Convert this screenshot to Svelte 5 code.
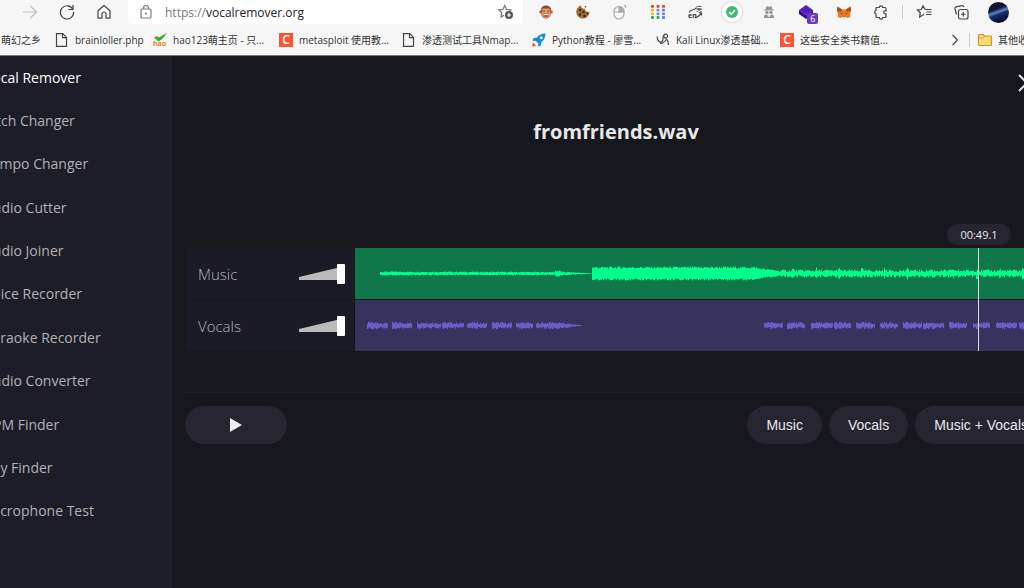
<script lang="ts">
  type Segment = { from: number; to: number; start: number; end: number };

  const tools = [
    'Vocal Remover',
    'Pitch Changer',
    'Tempo Changer',
    'Audio Cutter',
    'Audio Joiner',
    'Voice Recorder',
    'Karaoke Recorder',
    'Audio Converter',
    'BPM Finder',
    'Key Finder',
    'Microphone Test'
  ];

  const bookmarks = [
    { icon: '', title: '萌幻之乡' },
    { icon: 'file', title: 'brainloller.php' },
    { icon: 'hao', title: 'hao123萌主页 - 只...' },
    { icon: 'csdn', title: 'metasploit 使用教...' },
    { icon: 'file', title: '渗透测试工具Nmap...' },
    { icon: 'rocket', title: 'Python教程 - 廖雪...' },
    { icon: 'kali', title: 'Kali Linux渗透基础...' },
    { icon: 'csdn', title: '这些安全类书籍值...' }
  ];

  const extensions = ['monkey', 'cookie', 'mouse', 'grid', 'translate', 'check', 'spy', 'gem', 'fox', 'puzzle'];

  const WIDTH = 693;
  const MID = 25;

  // amplitude runs from start to end over each stretch of the track
  const intro: Segment[] = [
    { from: 25, to: 200, start: 2.2, end: 1.8 },
    { from: 200, to: 206, start: 3.5, end: 3 },
    { from: 206, to: 236, start: 2, end: 0.4 }
  ];
  const chorus: Segment[] = [
    { from: 237, to: 402, start: 7, end: 7 },
    { from: 402, to: 424, start: 6, end: 3 }
  ];
  const verse: Segment[] = [{ from: 424, to: 693, start: 4, end: 4 }];

  const vocals: Segment[] = [
    [12, 33], [37, 57], [62, 86], [87, 109], [112, 132], [137, 157], [161, 178],
    [409, 428], [432, 450], [456, 478], [479, 496], [501, 520], [525, 543],
    [548, 567], [568, 589], [594, 612], [618, 635], [641, 662], [664, 693]
  ].map(([from, to]) => ({ from, to, start: 4, end: 3 }));
  vocals.push({ from: 181, to: 198, start: 3, end: 4 }, { from: 198, to: 227, start: 4, end: 0.5 });

  function noise(n: number) {
    const v = Math.sin(n * 12.9898) * 43758.5453;
    return v - Math.floor(v);
  }

  function wave(segments: Segment[], floor: number, beat = 0) {
    let d = '';
    for (const s of segments) {
      for (let x = s.from; x < s.to; x++) {
        let amp = s.start + ((s.end - s.start) * (x - s.from)) / (s.to - s.from);
        if (beat && x % beat < 2) amp *= 1.5;
        const up = amp * (floor + (1 - floor) * noise(x));
        const down = amp * (floor + (1 - floor) * noise(x + 900));
        d += `M${x + 0.5} ${(MID + 0.5 - up).toFixed(1)}V${(MID + 0.5 + down).toFixed(1)}`;
      }
    }
    return d;
  }

  const tracks = [
    { name: 'Music', path: wave(intro, 0.5) + wave(chorus, 0.7) + wave(verse, 0.35, 23) },
    { name: 'Vocals', path: wave(vocals, 0.4) }
  ];
</script>

<div class="page">
  <header class="browser">
    <div class="toolbar">
      <button class="tool faded" aria-label="Forward">
        <svg width="16" height="16" viewBox="0 0 16 16"><path d="M1 8h13M8.500 2l6 6-6 6" /></svg>
      </button>
      <button class="tool" aria-label="Refresh">
        <svg width="16" height="16" viewBox="0 0 16 16"><path d="M13.800 5.200A6.600 6.600 0 1 0 14.600 8M14 1v4.500H9.500" /></svg>
      </button>
      <button class="tool" aria-label="Home">
        <svg width="14" height="16" viewBox="0 0 14 16"><path d="M1 6.800 7 1.500l6 5.300v7.400H9V10a2 2 0 0 0-4 0v4.200H1z" /></svg>
      </button>
      <div class="address">
        <svg class="lock" width="12" height="16" viewBox="0 0 12 16">
          <rect x="1" y="5" width="10" height="9" rx="1" /><path d="M3.500 5V4a2.500 2.500 0 0 1 5 0v1" /><circle cx="6" cy="9.500" r=".5" />
        </svg>
        <a href="https://vocalremover.org"><span>https://</span>vocalremover.org</a>
        <button class="star" aria-label="Add to favorites">
          <svg width="16" height="16" viewBox="0 0 16 16" stroke="#777">
            <path d="M6 11.300 3 13l.7-4.300L.8 6l4.100-.6L6.700 1.500l1.800 3.900 4.300.6-1 1" />
            <g stroke="none"><circle cx="11" cy="11" r="4" class="badge" /></g><path d="M9 11h4M11 9v4" stroke="#fff" />
          </svg>
        </button>
      </div>
      <div class="extensions">
        {#each extensions as name}
          <button class="tool" aria-label={name}>
            {#if name === 'monkey'}
              <svg width="14" height="14" viewBox="0 0 14 14" stroke="none">
                <circle cx="1.800" cy="7" r="1.700" fill="#bd7048" /><circle cx="12.200" cy="7" r="1.700" fill="#bd7048" />
                <path fill="#8d4932" d="M2 5C2 2 4 .5 7 .5S12 2 12 5l-.5 5c-.6 2.500-2.500 3.500-4.500 3.500S3 12.500 2.500 10z" />
                <path fill="#eb9a6a" d="M3 6c0-3 2.500-3.500 4-2 1.500-1.500 4-1 4 2l.5 3.500c-.5 2.500-2.500 3.500-4.500 3.500s-4-1-4.500-3.500z" />
                <path fill="#a8452f" d="M3.800 5.500h2.200v1.200H3.800zM8 5.500h2.200v1.200H8z" /><path fill="#c43a28" d="M3.800 8.500h6.400c-.2 2.500-1.500 3.500-3.200 3.500S4 11 3.800 8.500z" /><path fill="#fff" d="M4.500 9h5v1.200h-5z" />
              </svg>
            {:else if name === 'cookie'}
              <svg width="14" height="14" viewBox="0 0 14 14" stroke="none">
                <path fill="#a66c31" d="M5 .6a3 3 0 0 0 3.800 3 3 3 0 0 0 4.600 2.800A6.600 6.600 0 1 1 5 .6z" />
                <g fill="#40291b"><circle cx="4" cy="5" r="1.300" /><circle cx="7.500" cy="7" r="1.300" /><circle cx="4" cy="9.500" r="1.200" /><circle cx="8.500" cy="11" r="1.300" /><circle cx="11.200" cy="8.500" r="1" /><circle cx="9.500" cy="1.800" r=".8" /></g>
              </svg>
            {:else if name === 'mouse'}
              <svg width="14" height="15" viewBox="0 0 14 15" stroke="#aaa">
                <path d="M1 6.500a5 5 0 0 1 10 0V9a5 5 0 0 1-10 0z" /><path fill="#aaa" d="M6 1.500v5.500h5c0-3-1.500-5-5-5.500z" /><path d="M1 7h10M11 .5h1.500V3" />
              </svg>
            {:else if name === 'grid'}
              <svg width="14" height="14" viewBox="0 0 14 14" stroke="none">
                {#each ['#e53b32', '#e53b32', '#e53b32', '#f2bd17', '#5b8fee', '#4f86e8', '#f2bd17', '#5b8fee', '#5b8fee', '#37a852', '#37a852', '#4f86e8'] as fill, i}
                  <rect x={(i % 3) * 5.5} y={Math.floor(i / 3) * 3.7} width="3" height="2.800" rx="1" {fill} />
                {/each}
              </svg>
            {:else if name === 'translate'}
              <svg width="14" height="14" viewBox="0 0 14 14">
                <path d="M1 7.500c2-4 5-1 7.500-5M7 12.500c3.500.5 4.500-3 6.500-4.500M11 7.500l2.500.5v2.500" /><text x="0" y="13" font-size="7" font-weight="bold">en</text><text x="8" y="6" font-size="6">英</text>
              </svg>
            {:else if name === 'check'}
              <span class="check-bg">
                <svg width="12" height="12" viewBox="0 0 12 12" stroke="none"><circle cx="6" cy="6" r="6" fill="#3dbb70" /><path d="m3 6 2.200 2.200L9 4" stroke="#fff" stroke-width="1.700" /></svg>
              </span>
            {:else if name === 'spy'}
              <svg width="12" height="14" viewBox="0 0 12 14" stroke="none">
                <g fill="#999"><path d="m3.500 1 2.500.7L8.500 1l1 3.500H11v1H1v-1h1.500z" /><circle cx="4" cy="7.500" r="1.700" /><circle cx="8" cy="7.500" r="1.700" /><path d="M1 10.500 3 9.500l3 1.500 3-1.500 2 1V13H1z" /></g><path fill="#f6f6f6" d="m5.200 11.300.8-.5.800.5L6 13z" />
              </svg>
            {:else if name === 'gem'}
              <span class="gem">
                <svg width="15" height="15" viewBox="0 0 15 15" stroke="none"><path fill="#5420ba" d="M7 0 14 5 7 10 0 5z" /><path fill="#35108e" d="m0 5 7 5v4L0 9zM14 5 7 10v4l7-5z" /></svg>
                <b>6</b>
              </span>
            {:else if name === 'fox'}
              <svg width="14" height="13" viewBox="0 0 14 13" stroke="none">
                <path fill="#ed7b21" d="m.5.5 4.500 3h4l4.500-3L14 5l-1 3 .5 2.500L11 12l-2-.5H5L3 12 .5 10.500 1 8 0 5z" />
                <path fill="#b44a16" d="m.5.5 4.500 3L4 6 0 5zM13.500.5 9 3.500 10 6l4-1z" /><path fill="#333" d="m3.500 7 2 .5-.5 1zM10.500 7l-2 .5.500 1zM6 10.500h2v1.500H6z" /><path fill="#e7d9cc" d="m5 11.500 1-1 1 .5 1-.5 1 1-1 1H6z" />
              </svg>
            {:else}
              <svg width="14" height="14" viewBox="0 0 14 14"><path d="M3 2.500h2.300a1.700 1.700 0 0 1 3.400 0H11a1 1 0 0 1 1 1v2.300h-.8a1.500 1.500 0 0 0 0 3h.8v2.700a1 1 0 0 1-1 1H8.700a1.700 1.700 0 0 1-3.400 0H3a1 1 0 0 1-1-1V9a1.800 1.800 0 0 1 0-3.500v-2a1 1 0 0 1 1-1z" /></svg>
            {/if}
          </button>
        {/each}
      </div>
      <span class="rule"></span>
      <button class="tool" aria-label="Favorites">
        <svg width="15" height="14" viewBox="0 0 15 14"><path d="M9 4.500 7.700 4 6 .8 4.300 4.500.5 5l2.800 2.700-.7 4.300L6 10l1-.7M9 4.500h5.500M9.500 7h5M9 9.500h5.500" /></svg>
      </button>
      <button class="tool" aria-label="Collections">
        <svg width="15" height="15" viewBox="0 0 15 15"><rect x="4.500" y="4.500" width="9.500" height="9.500" rx="2" /><path d="M9.250 7v4.500M7 9.250h4.500M2.500 9.500 1 4a2 2 0 0 1 1-2.200L8 .7a2 2 0 0 1 2 1.300" /></svg>
      </button>
      <button class="tool" aria-label="Profile"><span class="avatar"></span></button>
    </div>

    <nav class="bookmarks">
      {#each bookmarks as b}
        <a href="#bookmark">
          {#if b.icon === 'file'}
            <svg class="icon" viewBox="0 0 14 14"><path d="M1.500.7h6.300l3.700 3.700v9h-10zM7.500 1v3.700h3.700" /></svg>
          {:else if b.icon === 'hao'}
            <svg class="icon" viewBox="0 0 14 14" stroke="none"><path fill="#39aa35" d="M1 4.500 4 3l2 1.500L13.500 0C11 5 8 7 5.500 8.500z" /><text class="hao" x="0" y="13" font-size="7" font-weight="bold">hao</text></svg>
          {:else if b.icon === 'csdn'}
            <span class="icon csdn">C</span>
          {:else if b.icon === 'rocket'}
            <svg class="icon" viewBox="0 0 14 14" stroke="none"><path fill="#168ed1" d="M13.500.5C9 .5 6.500 2.500 5 4.500L1.500 5 .5 8l3-.3 2.800 2.800-.3 3 3-1 .5-3.500c2-1.500 4-4 4-8.500z" /><circle cx="9.300" cy="4.700" r="1.500" fill="#e8f5ff" /><path fill="#e75d43" d="M1 9.500 4.500 13 0 13.500z" /></svg>
          {:else if b.icon === 'kali'}
            <svg class="icon" viewBox="0 0 14 14"><path d="M1 3.500C1.500 8 4 10 6 8.500S6 4 8 2s4-.5 3.500 1.500S8 6 8.500 3.500M4 9.500c1 2 4 0 6-2.500 1-1 2 0 2.500 5" /></svg>
          {/if}
          <span>{b.title}</span>
        </a>
      {/each}
      <button class="more" aria-label="More bookmarks"><svg width="8" height="12" viewBox="0 0 8 12"><path d="m1.500 1 5 5-5 5" /></svg></button>
      <a class="folder" href="#bookmark">
        <svg class="icon" viewBox="0 0 14 14" stroke="#c39a36"><path fill="#ffd976" d="M.5 2.500a1 1 0 0 1 1-1H5l1.500 1.500h6a1 1 0 0 1 1 1v7.500a1 1 0 0 1-1 1h-11a1 1 0 0 1-1-1zM.5 5H5l1.500-2" /></svg>
        <span>其他收藏夹</span>
      </a>
    </nav>
  </header>

  <div class="app">
    <nav class="sidebar">
      <ul>
        {#each tools as tool, i}
          <li><a href="#tool" class:active={i === 0}>{tool}</a></li>
        {/each}
      </ul>
    </nav>

    <main>
      <div class="top">
        <button class="close" aria-label="Close"><svg width="18" height="18" viewBox="0 0 18 18"><path d="m1 1 16 16M17 1 1 17" /></svg></button>
      </div>
      <h1>fromfriends.wav</h1>

      <section class="tracks">
        {#each tracks as track}
          <div class="track {track.name.toLowerCase()}">
            <div class="panel">
              <label for="volume-{track.name}">{track.name}</label>
              <div class="volume">
                <svg width="46" height="20" viewBox="0 0 46 20"><path d="M0 13 42 3v13H0z" /></svg>
                <input id="volume-{track.name}" type="range" min="0" max="100" value="100" />
              </div>
            </div>
            <svg class="wave" viewBox="0 0 {WIDTH} 51" preserveAspectRatio="none"><path d={track.path} /></svg>
          </div>
        {/each}
        <div class="playhead"><time>00:49.1</time></div>
      </section>

      <footer>
        <button class="pill play" aria-label="Play"><svg width="12" height="14" viewBox="0 0 12 14"><path d="M0 0 12 7 0 14z" /></svg></button>
        <button class="pill">Music</button>
        <button class="pill">Vocals</button>
        <button class="pill">Music + Vocals</button>
      </footer>
    </main>
  </div>
</div>

<style>
  :global(body) { background: #17181d; }
  .page { display: flex; flex-direction: column; min-height: 100vh; overflow: hidden; font-family: "Open Sans", "Noto Sans CJK SC", sans-serif; }
  button { border: 0; padding: 0; background: none; font: inherit; color: inherit; }
  a { color: inherit; text-decoration: none; }
  svg { display: block; flex: none; }

  .browser { background: #f6f6f6; color: #333; border-bottom: 1px solid #77787c; }
  .browser svg { fill: none; stroke-width: 1.2; overflow: visible; }
  .browser svg:not([stroke]) { stroke: #444; }
  .browser svg text { fill: #333; stroke: none; }
  .browser svg text.hao { fill: #f47b20; }
  .toolbar { display: flex; align-items: center; height: 24px; padding: 0 7px 0 11px; }
  .tool { display: flex; flex: none; align-items: center; justify-content: center; width: 37px; height: 24px; }
  .faded { opacity: 0.3; }
  .address { display: flex; flex: 1; align-items: center; height: 24px; margin: 0 4px 0 6px; padding: 0 9px 0 12px; background: #fff; border-radius: 0 0 4px 4px; font-size: 12px; }
  .address a { flex: 1; margin-left: 13px; color: #222; }
  .address a span { color: #777; }
  .lock { opacity: 0.7; }
  .badge { fill: #555; }
  .extensions { display: grid; grid-template-columns: repeat(10, 1fr); width: 373px; }
  .extensions .tool { width: auto; }
  .check-bg { display: grid; place-items: center; width: 20px; height: 20px; border-radius: 50%; background: #fff; box-shadow: 0 0 3px #bbb; }
  .gem { position: relative; }
  .gem b { position: absolute; left: 8px; top: 8px; width: 11px; height: 11px; border-radius: 2px; background: #6b39bd; color: #fff; font-size: 9px; font-weight: 400; line-height: 11px; text-align: center; }
  .rule { width: 1px; height: 14px; margin: 0 3px 0 2px; background: #ccc; }
  .avatar { width: 21px; height: 21px; border-radius: 50%; background: linear-gradient(160deg, #0b1536 35%, #6784bd 48%, #15306f 56%, #060d28 85%); }

  .bookmarks { display: grid; grid-template-columns: 42px 98px 126px 123px 130px 124px 124px 1fr 21px 54px; align-items: center; height: 31px; margin-left: 1px; font-size: 10px; white-space: nowrap; }
  .bookmarks a { display: flex; align-items: center; gap: 6px; }
  .bookmarks a:not(:first-child) { padding-left: 12px; }
  .icon { width: 14px; height: 14px; flex: none; }
  .csdn { background: #fc5531; color: #fff; font-size: 12px; font-weight: 600; line-height: 14px; text-align: center; }
  .more { display: flex; align-items: center; height: 14px; padding-left: 2px; border-right: 1px solid #ccc; }
  .bookmarks a.folder { padding-left: 8px; }

  .app { display: flex; flex: 1; }
  .sidebar { flex: none; width: 172px; background: #1d1d27; }
  .sidebar ul { display: grid; grid-auto-rows: 1fr; align-items: center; height: 477px; margin: 0 0 0 -16px; padding: 0; list-style: none; }
  .sidebar li { padding-bottom: 2px; }
  .sidebar a { color: #b1b1b4; font-size: 14px; line-height: 20px; }
  .sidebar a.active { color: #fff; }

  main { flex: 1; min-width: 0; margin-right: -36px; padding: 18px 13px; color: #e8e8ea; }
  .top { display: flex; justify-content: flex-end; padding-right: 11px; }
  .close svg { stroke: #ddd; stroke-width: 2; }
  h1 { margin: 24px 0 0; font-size: 20px; font-weight: 700; line-height: 32px; text-align: center; }

  .tracks { position: relative; display: grid; gap: 1px; margin-top: 100px; }
  .track { display: flex; height: 51px; }
  .panel { display: flex; flex: none; align-items: center; justify-content: space-between; box-sizing: border-box; width: 170px; padding: 0 9px 0 13px; background: #1b1b25; border-right: 1px solid #17181d; color: #b4b4be; font-size: 15px; font-weight: 300; }
  .volume { display: grid; }
  .volume > * { grid-area: 1 / 1; }
  .volume svg { fill: #bbb; }
  .volume input { appearance: none; width: 46px; height: 20px; margin: 0; background: none; }
  .volume input::-webkit-slider-thumb { appearance: none; width: 8px; height: 20px; border-radius: 1px; background: #fff; }
  .wave { flex: 1; min-width: 0; height: 51px; }
  .music .wave { background: #10774b; stroke: #00ff8c; }
  .vocals .wave { background: #38325f; stroke: #6a5cc9; }
  .playhead { position: absolute; top: 0; right: 68px; bottom: 0; width: 1px; background: #ddd; }
  time { position: absolute; bottom: 100%; left: -31px; width: 64px; margin-bottom: 3px; border-radius: 11px; background: #262530; font-size: 11px; line-height: 21px; text-align: center; }

  footer { display: flex; gap: 7px; margin-top: 41px; padding-top: 13px; border-top: 1px solid #202127; }
  .pill { height: 38px; padding: 0 19px; border-radius: 19px; background: #262530; font-family: "Liberation Sans", Arial, sans-serif; font-size: 14px; white-space: nowrap; }
  .play { display: grid; place-items: center; width: 102px; margin-right: auto; }
  .play svg { fill: #eee; }
</style>
